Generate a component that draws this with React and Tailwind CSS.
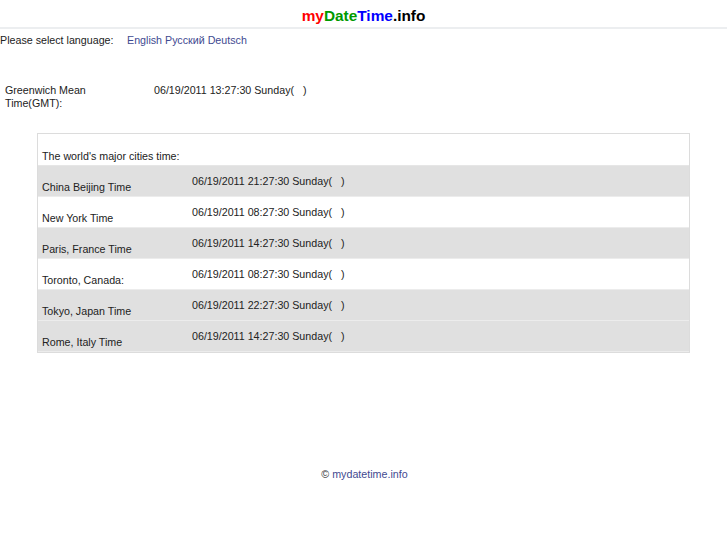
const cities = [
  ["China Beijing Time", "06/19/2011 21:27:30 Sunday(   )", true],
  ["New York Time", "06/19/2011 08:27:30 Sunday(   )", false],
  ["Paris, France Time", "06/19/2011 14:27:30 Sunday(   )", true],
  ["Toronto, Canada:", "06/19/2011 08:27:30 Sunday(   )", false],
  ["Tokyo, Japan Time", "06/19/2011 22:27:30 Sunday(   )", true],
  ["Rome, Italy Time", "06/19/2011 14:27:30 Sunday(   )", true],
];

export default function App() {
  return (
    <div className="min-h-[545px] bg-white text-[10.7px] leading-[13px] text-[#222]" style={{ fontFamily: '"Liberation Sans", Arial, sans-serif' }}>
      <div className="flex h-[29px] items-center justify-center border-b-2 border-[#eceef0] pt-[4px] text-[15.4px] font-bold">
        <span className="text-[#ff0000]">my</span>
        <span className="text-[#009900]">Date</span>
        <span className="text-[#0000ff]">Time</span>
        <span className="text-black">.info</span>
      </div>

      <div className="flex pt-[5px]">
        <span className="w-[127px] whitespace-pre">Please select language:</span>
        <span className="text-[#3f4a91]">English Русский Deutsch</span>
      </div>

      <div className="mt-[37px] flex pl-[5px]">
        <div className="w-[149px]">
          Greenwich Mean
          <br />
          Time(GMT):
        </div>
        <div className="whitespace-pre">06/19/2011 13:27:30 Sunday(   )</div>
      </div>

      <div className="mx-[37px] mt-[23px] w-[653px] border border-[#dcdcdc]">
        <div className="flex h-[32px] items-end border-b border-[#e6e6e6] pb-[2px] pl-[4px]">
          The world's major cities time:
        </div>
        {cities.map(([name, time, gray]) => (
          <div
            key={name}
            className={`flex h-[31px] border-b border-[#ececec] ${gray ? "bg-[#e0e0e0]" : "bg-white"}`}
          >
            <div className="flex w-[154px] items-end pb-[2px] pl-[4px]">{name}</div>
            <div className="pt-[9px] whitespace-pre">{time}</div>
          </div>
        ))}
      </div>

      <div className="mt-[115px] flex justify-center pl-[2px] text-[#3f4a91]">
        <span className="mr-[3px] text-[#333]">©</span>mydatetime.info
      </div>
    </div>
  );
}
